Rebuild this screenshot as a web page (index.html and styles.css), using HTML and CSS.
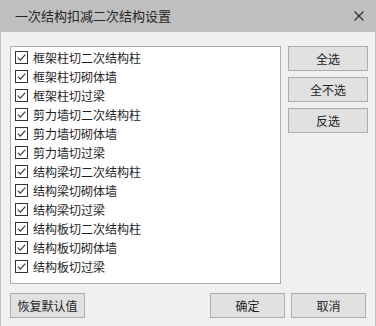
FILE: index.html
```html
<!DOCTYPE html>
<html lang="zh-CN">
<head>
    <meta charset="UTF-8">
    <meta name="viewport" content="width=device-width, initial-scale=1.0">
    <title>一次结构扣减二次结构设置</title>
    <link rel="stylesheet" href="styles.css">
</head>
<body>
    <div class="dialog">
        <!-- Title Bar -->
        <div class="title-bar">
            <span class="title">一次结构扣减二次结构设置</span>
            <svg class="close" width="10" height="10" viewBox="0 0 10 10">
                <path d="M0.5 0.5 L9.5 9.5 M9.5 0.5 L0.5 9.5" stroke="#2b2b2b" stroke-width="1.1" fill="none"/>
            </svg>
        </div>

        <div class="content">
            <div class="main-row">
                <!-- Check List -->
                <ul class="check-list" id="checkList"></ul>

                <!-- Side Buttons -->
                <div class="side-buttons">
                    <button class="btn side-btn">全选</button>
                    <button class="btn side-btn">全不选</button>
                    <button class="btn side-btn">反选</button>
                </div>
            </div>

            <div class="bottom-row">
                <button class="btn bottom-btn">恢复默认值</button>
                <div class="bottom-right">
                    <button class="btn bottom-btn">确定</button>
                    <button class="btn bottom-btn">取消</button>
                </div>
            </div>
        </div>
    </div>

    <script>
        var items = [
            "框架柱切二次结构柱",
            "框架柱切砌体墙",
            "框架柱切过梁",
            "剪力墙切二次结构柱",
            "剪力墙切砌体墙",
            "剪力墙切过梁",
            "结构梁切二次结构柱",
            "结构梁切砌体墙",
            "结构梁切过梁",
            "结构板切二次结构柱",
            "结构板切砌体墙",
            "结构板切过梁"
        ];

        var list = document.getElementById("checkList");
        for (var i = 0; i < items.length; i++) {
            var li = document.createElement("li");
            li.className = "check-item";
            li.innerHTML =
                '<span class="box"><svg width="11" height="11" viewBox="0 0 11 11">' +
                '<path d="M1.8 5.6 L4.3 8.1 L9.3 2.6" stroke="#3a3a3a" stroke-width="1.2" fill="none"/>' +
                '</svg></span>' +
                '<span class="label">' + items[i] + '</span>';
            list.appendChild(li);
        }
    </script>
</body>
</html>
```

FILE: styles.css
```css
/* General Styles */
body {
    margin: 0;
    padding: 0;
    font-family: "Noto Sans CJK SC", "Noto Sans", sans-serif;
    font-size: 12px;
    color: #1e1e1e;
    background: #f0f0f0;
}

.dialog {
    width: 376px;
    height: 326px;
    display: flex;
    flex-direction: column;
}

/* Title Bar */
.title-bar {
    height: 31px;
    flex-shrink: 0;
    background: #bfbfbf;
    display: flex;
    align-items: center;
    justify-content: space-between;
    padding: 0 12px 1px 15px;
}

.title {
    font-size: 13px;
    color: #262626;
}

.close {
    display: block;
    margin-top: 1px;
}

/* Content */
.content {
    flex: 1;
    background: #f0f0f0;
    border: 1px solid #bfbfbf;
    border-top: none;
    padding: 14px 7px 10px 9px;
    display: flex;
    flex-direction: column;
}

.main-row {
    display: flex;
    gap: 7px;
}

.check-list {
    list-style: none;
    margin: 0;
    padding: 1px 0 0 0;
    width: 269px;
    height: 235px;
    background: #fff;
    border: 1px solid #acacac;
}

.check-item {
    height: 19px;
    display: flex;
    align-items: center;
    padding-left: 4px;
}

.box {
    width: 11px;
    height: 11px;
    border: 1px solid #333;
    display: flex;
    background: #fff;
}

.label {
    margin-left: 5px;
    line-height: 19px;
}

/* Buttons */
.btn {
    font-family: inherit;
    font-size: 12px;
    color: #1e1e1e;
    background: #e1e1e1;
    border: 1px solid #adadad;
    padding: 0;
    margin: 0;
    height: 25px;
    cursor: pointer;
}

.btn:hover {
    background: #e5f1fb;
    border-color: #0078d7;
}

.side-buttons {
    display: flex;
    flex-direction: column;
    gap: 6px;
}

.side-btn {
    width: 80px;
}

.bottom-row {
    margin-top: 9px;
    padding-right: 2px;
    display: flex;
    justify-content: space-between;
}

.bottom-right {
    display: flex;
    gap: 6px;
}

.bottom-btn {
    width: 75px;
}
```
